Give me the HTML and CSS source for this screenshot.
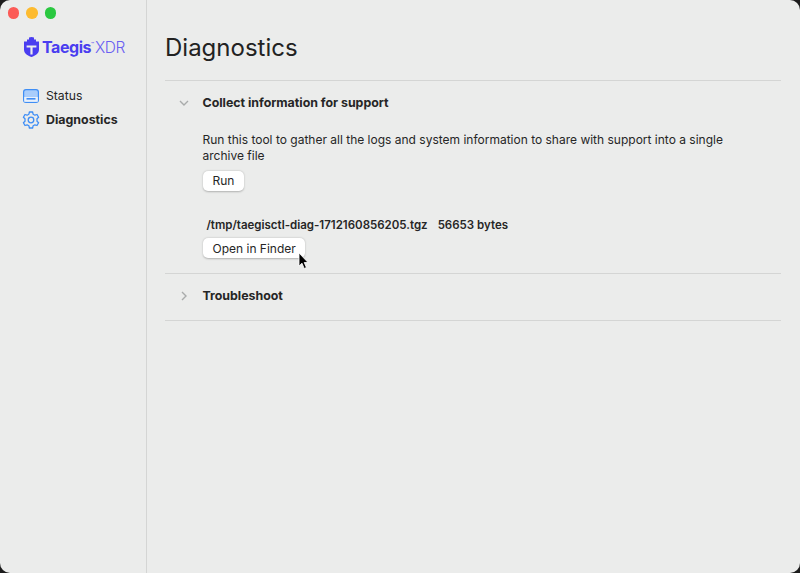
FILE: index.html
```html
<!DOCTYPE html>
<html lang="en">
<head>
<meta charset="utf-8">
<title>Diagnostics</title>
<link rel="stylesheet" href="styles.css">
</head>
<body>
<div class="window">
  <aside class="sidebar">
    <div class="lights"><span class="light red"></span><span class="light yellow"></span><span class="light green"></span></div>
    <div class="logo">
      <svg class="logo-mark" viewBox="0 0 15 20" width="15" height="20"><path fill="#4a3df0" d="M0 4.5 L3 4.5 V2.5 H5 V0.5 L7.5 0 L10 0.5 V2.5 H12 V4.5 H15 V12.5 C15 16.5 11.5 18.7 7.5 20 C3.5 18.7 0 16.5 0 12.5 Z"/><path fill="#eceded" d="M2.6 8.5 H12.4 V10.4 H8.6 V17.5 H6.4 V10.4 H2.6 Z"/></svg>
      <span class="logo-name">Taegis</span><span class="logo-tm">™</span><span class="logo-xdr">XDR</span>
    </div>
    <nav class="nav">
      <div class="nav-item">
        <svg class="nav-icon" viewBox="0 0 16 14" width="16" height="14"><rect x="0.6" y="0.6" width="14.8" height="12.8" rx="2.4" fill="#a9cdfb" stroke="#3f8ef5" stroke-width="1.2"/><rect x="1.2" y="8" width="13.6" height="4.8" fill="#e8f0fb"/><rect x="3.5" y="9" width="9" height="1.6" fill="#3f8ef5"/></svg>
        <span>Status</span>
      </div>
      <div class="nav-item active">
        <svg class="nav-icon gear" viewBox="0 0 18 18" width="18" height="18" fill="none" stroke="#3f8ef5" stroke-width="1.3" stroke-linejoin="round"><path d="M7.4 1 H10.6 L11.1 3.2 L12.9 4.2 L15 3.5 L16.6 6.3 L15 7.8 V10.2 L16.6 11.7 L15 14.5 L12.9 13.8 L11.1 14.8 L10.6 17 H7.4 L6.9 14.8 L5.1 13.8 L3 14.5 L1.4 11.7 L3 10.2 V7.8 L1.4 6.3 L3 3.5 L5.1 4.2 L6.9 3.2 Z"/><circle cx="9" cy="9" r="2.8"/></svg>
        <span>Diagnostics</span>
      </div>
    </nav>
  </aside>
  <main class="main">
    <h1 class="title">Diagnostics</h1>
    <section class="panel">
      <div class="panel-head">
        <svg class="chev" viewBox="0 0 10 10" width="10" height="10" fill="none" stroke="#a9abab" stroke-width="1.4"><path d="M1 3 L5 7 L9 3"/></svg>
        <h2>Collect information for support</h2>
      </div>
      <div class="panel-body">
        <p class="desc">Run this tool to gather all the logs and system information to share with support into a single archive file</p>
        <button class="btn">Run</button>
        <div class="result"><span>/tmp/taegisctl-diag-1712160856205.tgz</span><span>56653 bytes</span></div>
        <div class="btn-wrap">
          <button class="btn">Open in Finder</button>
          <svg class="cursor" viewBox="0 0 12 18" width="12" height="18"><path d="M1 1 V14 L4 11.2 L6.2 16.5 L8.4 15.5 L6.2 10.5 H10 Z" fill="#000" stroke="#fff" stroke-width="0.8"/></svg>
        </div>
      </div>
    </section>
    <section class="panel closed">
      <div class="panel-head">
        <svg class="chev" viewBox="0 0 10 10" width="10" height="10" fill="none" stroke="#a9abab" stroke-width="1.4"><path d="M3 1 L7 5 L3 9"/></svg>
        <h2>Troubleshoot</h2>
      </div>
    </section>
  </main>
</div>
</body>
</html>
```
FILE: styles.css
```css
* { box-sizing: border-box; }
html, body { margin: 0; height: 100%; background: #1c1c1c; }
body { font-family: Inter, "Liberation Sans", sans-serif; color: #262626; overflow: hidden; }
.window { width: 800px; height: 573px; display: flex; background: #ebeceb; border-radius: 10px; overflow: hidden; }
.sidebar { width: 147px; flex: none; border-right: 1px solid #d4d5d4; padding: 7px 0 0 8px; }
.lights { display: flex; gap: 7px; }
.light { width: 11.5px; height: 11.5px; border-radius: 50%; }
.red { background: #fc5b57; margin-left: -0.5px; }
.yellow { background: #fdbb2f; }
.green { background: #2ac840; }
.logo { display: flex; align-items: center; margin: 18.5px 0 0 16px; height: 20px; color: #4a3df0; white-space: nowrap; }
.logo-mark { flex: none; margin-right: 3px; }
.logo-name { font-size: 16px; font-weight: 700; letter-spacing: -0.45px; }
.logo-tm { font-size: 5px; margin: -6px 1px 0 0; }
.logo-xdr { font-size: 15.5px; font-weight: 300; letter-spacing: -0.5px; color: #6a60f2; }
.nav { margin-top: 28.5px; display: flex; flex-direction: column; gap: 4px; padding-left: 15px; }
.nav-item { display: flex; align-items: center; height: 20px; font-size: 12.2px; gap: 7px; }
.nav-item.active { font-size: 12.4px; font-weight: 700; gap: 6px; }
.nav-icon { flex: none; }
.gear { margin-left: -1px; }
.main { flex: 1; padding: 0 19px 0 18px; min-width: 0; }
.title { margin: 30px 0 15px; font-size: 24px; line-height: 35px; font-weight: 400; color: #222; }
.panel { border-top: 1px solid #d4d5d4; }
.panel.closed { border-bottom: 1px solid #d4d5d4; padding-bottom: 3px; }
.panel-head { display: flex; align-items: center; height: 43px; }
.chev { flex: none; margin: 0 14px 0 13.5px; }
.panel-head h2 { margin: 0; font-size: 12.4px; font-weight: 700; letter-spacing: -0.02px; }
.panel-body { padding: 8px 40px 15px 37.5px; }
.desc { margin: 0 0 7.5px; font-size: 12px; line-height: 15.5px; }
.btn { display: block; height: 20px; margin-left: 0.5px; padding: 0 9.5px; border: 0; border-radius: 5px; background: #fff; font: 12px Inter, "Liberation Sans", sans-serif; color: #262626; box-shadow: 0 0.5px 2px rgba(0,0,0,.25); }
.result { display: flex; gap: 10px; margin: 27px 0 5.5px 4px; font-size: 11.5px; font-weight: 600; line-height: 15px; }
.btn-wrap { position: relative; width: fit-content; }
.cursor { position: absolute; left: 95px; top: 14px; }
```
